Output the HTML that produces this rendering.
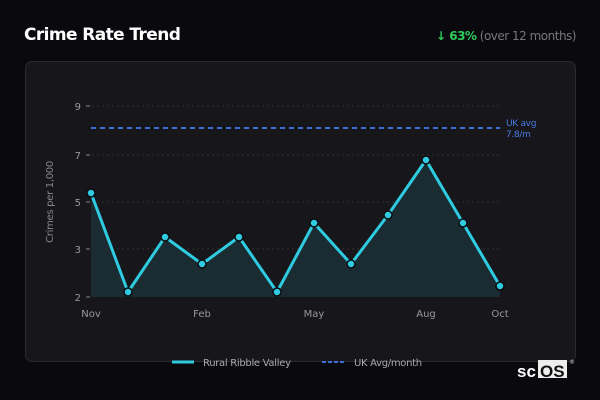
<!DOCTYPE html>
<html><head><meta charset="utf-8"><style>
body{margin:0;width:600px;height:400px;background:#0a0a0e;font-family:"DejaVu Sans","Liberation Sans",sans-serif;position:relative;overflow:hidden}
.t{position:absolute;left:24px;top:25px;color:#fff;font-weight:bold;font-size:17px;letter-spacing:-0.6px}
.s{position:absolute;right:24px;top:29px;font-size:12px;color:#777;letter-spacing:-0.5px}
.s b{color:#2ecc5a}
.card{position:absolute;left:25px;top:61px;width:549px;height:299px;background:#16161b;border:1px solid #2a2a30;border-radius:7px}
svg{position:absolute;left:0;top:0}
</style></head><body>
<div class="t">Crime Rate Trend</div>
<div class="s"><b>↓ 63%</b> (over 12 months)</div>
<div class="card"></div>
<svg width="600" height="400" font-family="DejaVu Sans, Liberation Sans, sans-serif">
<g stroke="#333" stroke-dasharray="2,3" stroke-width="1">
<line x1="92" y1="106" x2="500" y2="106"/><line x1="92" y1="155" x2="500" y2="155"/><line x1="92" y1="202" x2="500" y2="202"/><line x1="92" y1="249" x2="500" y2="249"/>
</g>
<g stroke="#888" stroke-width="1"><line x1="86" y1="106" x2="90" y2="106"/><line x1="86" y1="155" x2="90" y2="155"/><line x1="86" y1="202" x2="90" y2="202"/><line x1="86" y1="249" x2="90" y2="249"/><line x1="86" y1="297" x2="90" y2="297"/></g>
<g fill="#999" font-size="10" text-anchor="end"><text x="81" y="110">9</text><text x="81" y="159">7</text><text x="81" y="206">5</text><text x="81" y="253">3</text><text x="81" y="301">2</text></g>
<text transform="translate(53,202) rotate(-90)" fill="#888" font-size="10" text-anchor="middle" letter-spacing="-0.3">Crimes per 1,000</text>
<line x1="91" y1="128" x2="500" y2="128" stroke="#3d6fd6" stroke-width="2" stroke-dasharray="5,4"/>
<text x="506" y="126" fill="#4a7be0" font-size="9" letter-spacing="-0.3">UK avg</text><text x="506" y="137" fill="#4a7be0" font-size="9" letter-spacing="-0.3">7.8/m</text>
<polygon fill="#1a2c32" points="91,193 128,292 165,237 202,264 239,237 277,292 314,223 351,264 388,215 426,160 463,223 500,286 500,297 91,297"/>
<polyline fill="none" stroke="#2fcbe0" stroke-width="3" stroke-linejoin="round" points="91,193 128,292 165,237 202,264 239,237 277,292 314,223 351,264 388,215 426,160 463,223 500,286"/>
<g fill="#2fcbe0" stroke="#0c0c10" stroke-width="1.5">
<circle cx="91" cy="193" r="4"/><circle cx="128" cy="292" r="4"/><circle cx="165" cy="237" r="4"/><circle cx="202" cy="264" r="4"/><circle cx="239" cy="237" r="4"/><circle cx="277" cy="292" r="4"/><circle cx="314" cy="223" r="4"/><circle cx="351" cy="264" r="4"/><circle cx="388" cy="215" r="4"/><circle cx="426" cy="160" r="4"/><circle cx="463" cy="223" r="4"/><circle cx="500" cy="286" r="4"/>
</g>
<g fill="#999" font-size="10" text-anchor="middle"><text x="91" y="317">Nov</text><text x="202" y="317">Feb</text><text x="314" y="317">May</text><text x="426" y="317">Aug</text><text x="500" y="317">Oct</text></g>
<line x1="172" y1="362" x2="194" y2="362" stroke="#2fcbe0" stroke-width="3"/>
<text x="203" y="366" fill="#aaa" font-size="10" letter-spacing="-0.3">Rural Ribble Valley</text>
<line x1="322" y1="362" x2="345" y2="362" stroke="#3d6fd6" stroke-width="2" stroke-dasharray="4,2"/>
<text x="354" y="366" fill="#aaa" font-size="10" letter-spacing="-0.3">UK Avg/month</text>
<text x="517" y="377" fill="#fff" font-size="17" font-weight="bold" font-family="Liberation Sans, sans-serif">sc</text>
<rect x="538" y="360" width="29" height="18" fill="#eee"/>
<text x="540" y="377" fill="#111" font-size="17" font-weight="bold" font-family="Liberation Sans, sans-serif">OS</text>
<text x="569" y="364" fill="#ccc" font-size="6">®</text>
</svg>
</body></html>
